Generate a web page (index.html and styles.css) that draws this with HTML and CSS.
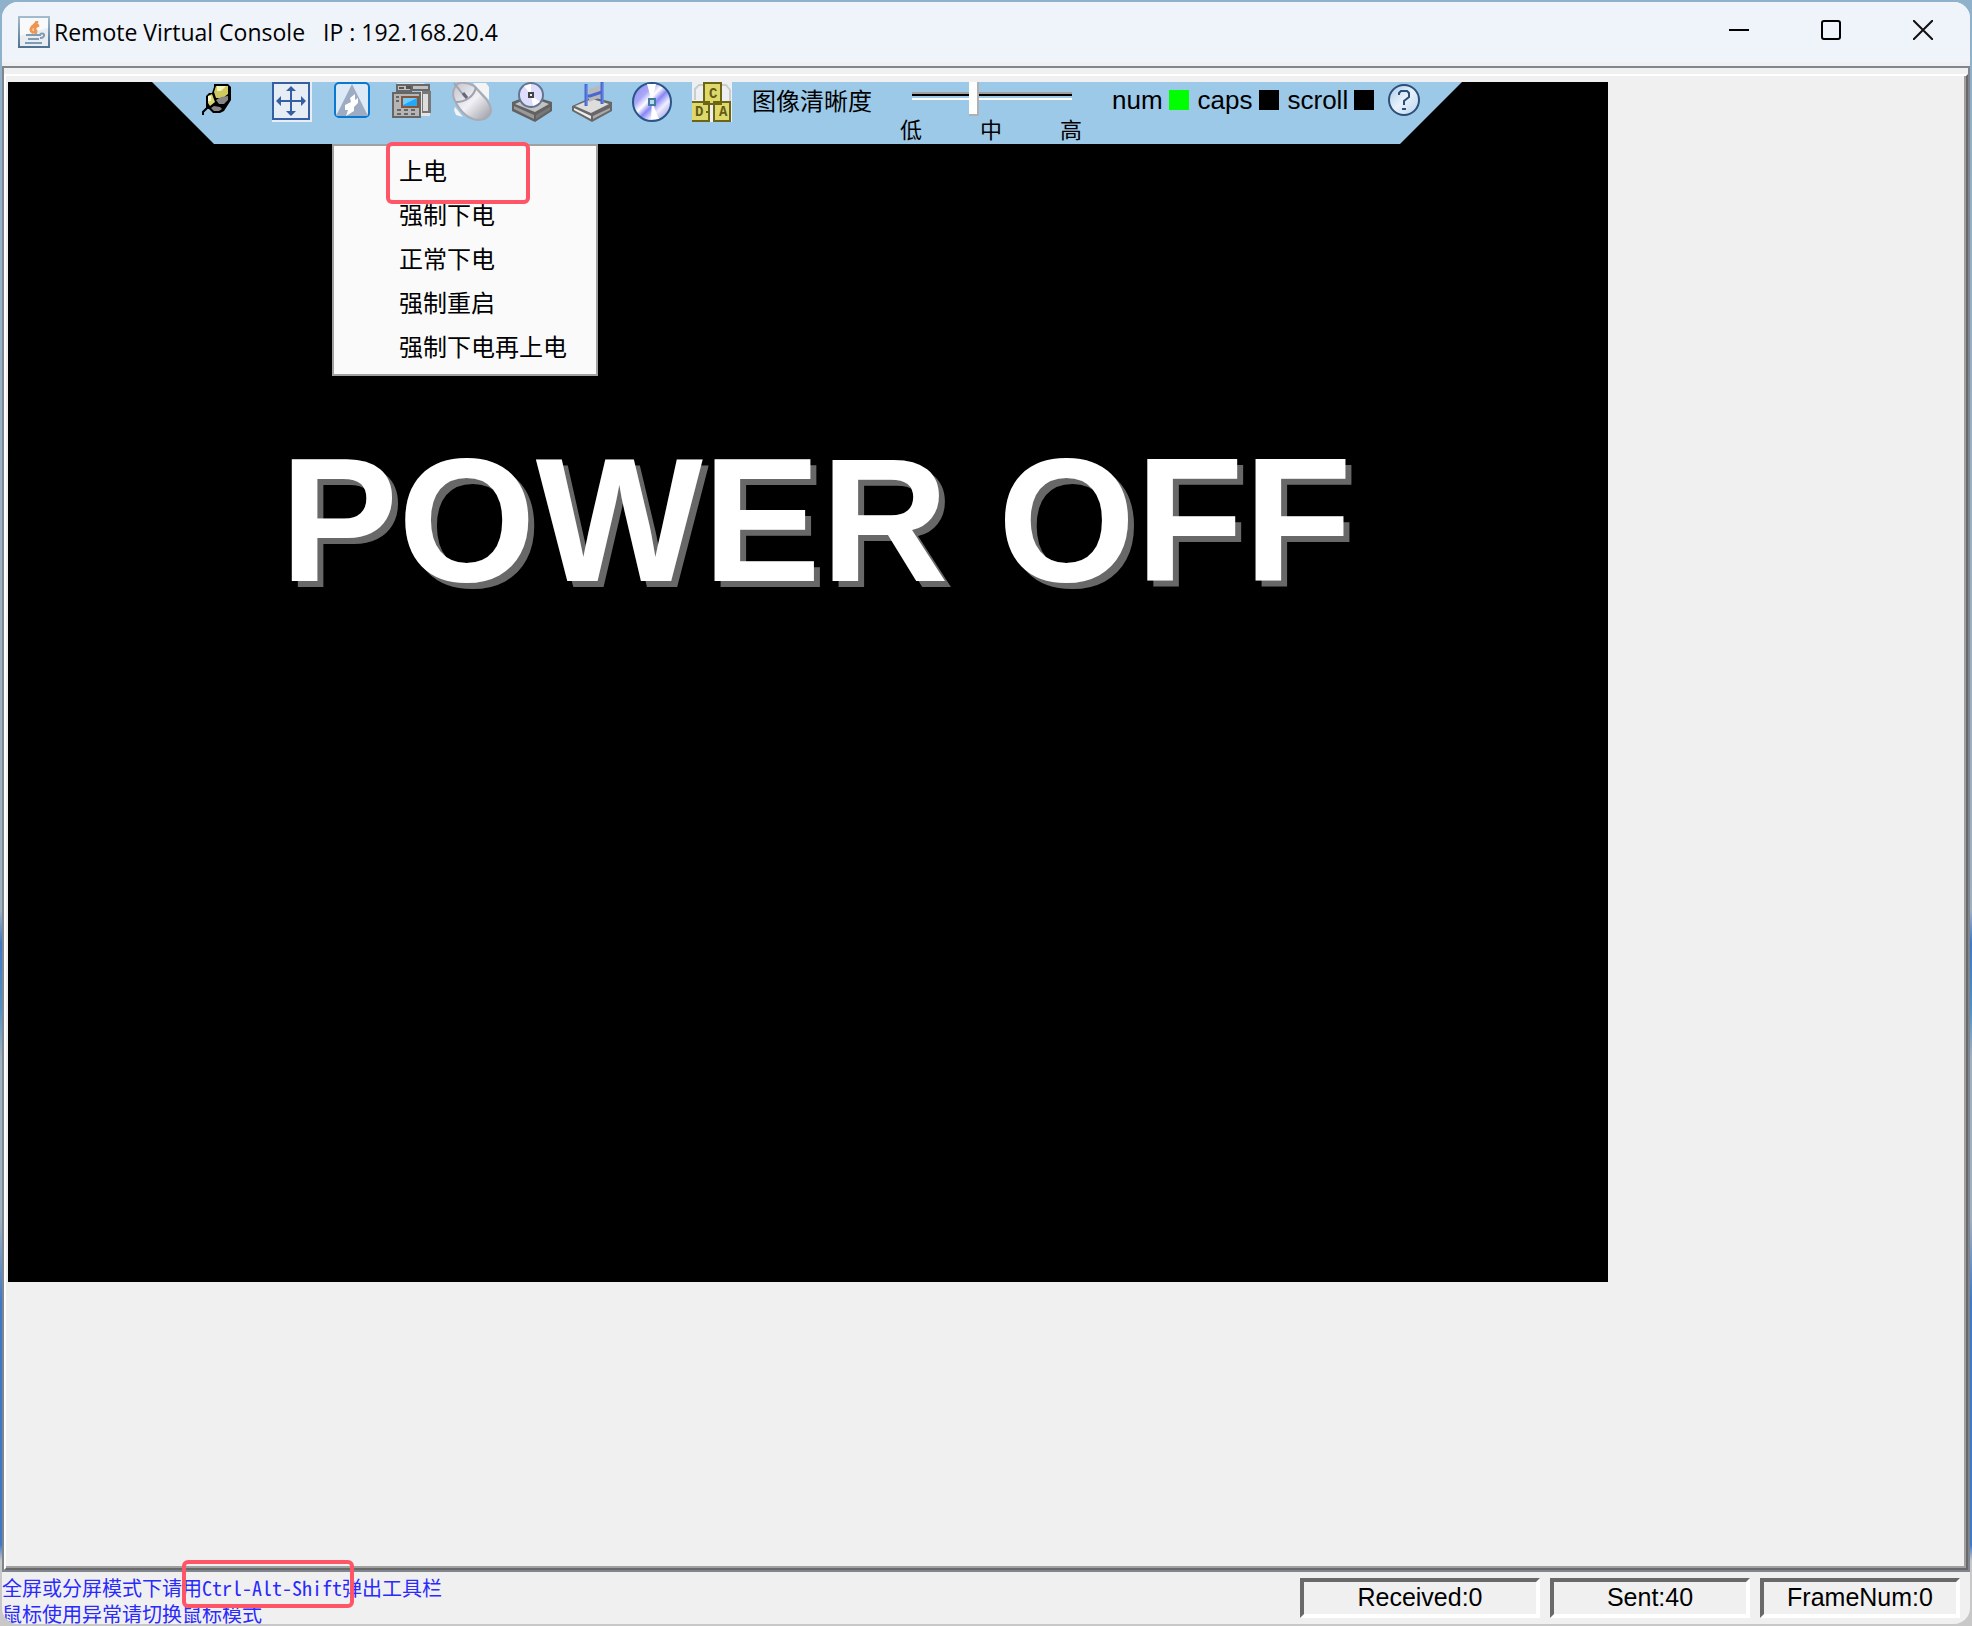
FILE: index.html
```html
<!DOCTYPE html>
<html lang="zh-CN">
<head>
<meta charset="utf-8">
<title>Remote Virtual Console</title>
<link rel="stylesheet" href="styles.css">
</head>
<body>
<div class="window">
  <header class="titlebar">
    <svg class="java" viewBox="0 0 32 32" aria-hidden="true">
      <defs><linearGradient id="jb" x2="0" y2="1"><stop stop-color="#a5bdcf"/><stop offset="1" stop-color="#4c718e"/></linearGradient></defs>
      <rect width="32" height="32" fill="url(#jb)"/><rect x="2" y="2" width="28" height="28" fill="#e9edf1"/><path d="M2 2h28v10L2 20z" fill="#f8f9fa"/>
      <path d="M19 5c0 4-7 5-6 9 0 2 2 2 3 3M21 9c-5 2-5 4-3 6 0 1 0 2-1 3" fill="none" stroke="#ee9551" stroke-width="3"/>
      <path d="M8 19h15M10 23h11M7 27h17M22 18c6-2 5 4 0 4" fill="none" stroke="#7e9db5" stroke-width="2"/>
    </svg>
    <h1 class="title"><span>Remote Virtual Console</span><span>IP : 192.168.20.4</span></h1>
    <div class="controls">
      <button aria-label="Minimize"><svg viewBox="0 0 20 20"><path d="M0 10h20" stroke="#000" stroke-width="2"/></svg></button>
      <button aria-label="Maximize"><svg viewBox="0 0 20 20"><rect x="1" y="1" width="18" height="18" rx="2" fill="none" stroke="#000" stroke-width="2"/></svg></button>
      <button aria-label="Close"><svg viewBox="0 0 20 20"><path d="M0 0l20 20M20 0L0 20" stroke="#111" stroke-width="2"/></svg></button>
    </div>
  </header>
  <main class="viewport">
    <div class="bevel">
      <div class="screen">
        <nav class="toolbar">
          <div class="tools">
            <button aria-label="Pin"><svg viewBox="0 0 40 40"><path d="M7 33v-3l6-6" fill="none" stroke="#000" stroke-width="2"/><path d="M18 2h14l3 3v13l-7 11-4 2h-7l-4-4h-3V14l3-3h3l2-6z" fill="#000"/><path d="M20 4h12v8l-5 4h-7l-2-6z" fill="#cfca60"/><path d="M21 4h9l-5 5h-4z" fill="#f6f5b8"/><path d="M12 14l4-2 3 8-5 4-2-3z" fill="#dcd76c"/><path d="M12 14h3v5h-3z" fill="#fbfad4"/><path d="M20 18l5-3 7-1v4l-4 4h-5zM18 24l6 1 2 2-3 2h-5l-3-3z" fill="#868686"/></svg></button>
            <button aria-label="Full screen"><svg viewBox="0 0 40 40"><path d="M0 0h40v40H0z" fill="#e9eef4"/><path d="M1 1h36v36H1z" fill="#e6edf5" stroke="#345fa5" stroke-width="2"/><path d="M19 6v27M5 19h28" stroke="#345fa5" stroke-width="2"/><path d="M19 4l-5 5h10zM19 34l-5-5h10zM4 19l5-5v10zM34 19l-5-5v10z" fill="#345fa5"/></svg></button>
            <button aria-label="Power"><svg viewBox="0 0 40 40"><rect x="3" y="1" width="34" height="34" rx="4" fill="#dce9f7" stroke="#0878d0" stroke-width="2"/><path d="M20 2L4 34h32z" fill="#9dabc3"/><path d="M18 16l5-4v6l3-2v5l-4 4v4l-8 5 2-6h-3v-5l6-3z" fill="#fff"/></svg></button>
            <button aria-label="Record"><svg viewBox="0 0 40 40"><path d="M5 1h27l6 5v28h-9V9H5z" fill="#e2e4e6"/><path d="M5 3h14v6H5zM20 3h17v5H20z" fill="#c0c0c0" stroke="#686868" stroke-width="2"/><path d="M7 5h5v2H7zM14 4h5v3h-5z" fill="#555"/><path d="M30 9h9v22h-9z" fill="#777"/><path d="M31 12h5v17h-5z" fill="#ddd"/><path d="M1 11h27v24H1z" fill="#b5b5b5" stroke="#666" stroke-width="2"/><path d="M10 15h16v10H10z" fill="#20a9fb" stroke="#85563b" stroke-width="2"/><path d="M11 16h14L11 23z" fill="#72cafd"/><path d="M4 15h3m-3 4h3M5 28h4m3 0h4m3 0h4M5 32h4m3 0h4m3 0h4" stroke="#666" stroke-width="2"/></svg></button>
            <button aria-label="Mouse"><svg viewBox="0 0 40 40"><defs><linearGradient id="m" x2="1" y2="1"><stop offset="0" stop-color="#c2c2cc"/><stop offset=".5" stop-color="#f1f1f6"/><stop offset="1" stop-color="#9898a1"/></linearGradient></defs><path d="M21 1h13l3 4v13zM3 25l8 10-7-2-2-5z" fill="#f6f4f2"/><path d="M3 5C5-1 15 0 22 4l12 13c10 13 3 21-8 21-11-1-18-9-23-19C0 14 1 8 3 5z" fill="url(#m)" stroke="#aaaab4" stroke-width="2"/><path d="M2 1l11 14M4 20c9 0 18-5 20-15" fill="none" stroke="#a2a2ad" stroke-width="2"/><path d="M11 11l4 5" stroke="#666678" stroke-width="3"/></svg></button>
            <button aria-label="CD drive"><svg viewBox="0 0 40 40"><path d="M0 20l18-7 22 7v9L23 40 0 29z" fill="#626262"/><path d="M3 22l15-7 19 7-14 8z" fill="#c3c3c3"/><path d="M2 24l20 9v4L2 27z" fill="#999"/><path d="M24 33l14-8v3l-14 9z" fill="#777"/><circle cx="19" cy="13" r="12" fill="#deddfb" stroke="#637690" stroke-width="2"/><path d="M19 13L12 4l7-2zM19 13l9 7-7 4z" fill="#fff"/><path d="M17 11h4v4h-4z" fill="#eee" stroke="#444" stroke-width="2"/></svg></button>
            <button aria-label="Floppy drive"><svg viewBox="0 0 40 40"><path d="M0 24l20-9 20 5v9L20 40 0 29z" fill="#686868"/><path d="M3 24l17-7 17 5-18 9z" fill="#ddd"/><path d="M2 26l17 8v3L2 28z" fill="#eee"/><path d="M21 34l17-8v2l-17 9z" fill="#aaa"/><path d="M17 7l12-4v12l-12 5z" fill="#b9b9bd"/><path d="M14 2v22M30 0v22M14 14h4l12-4" fill="none" stroke="#4968cf" stroke-width="3"/><path d="M15 3v20M31 1v20" stroke="#7890ea"/></svg></button>
            <button aria-label="Disc"><svg viewBox="0 0 40 40"><defs><linearGradient id="d" x2="1" y2="1"><stop stop-color="#8b89ef"/><stop offset=".3" stop-color="#aaa8f8"/><stop offset=".43" stop-color="#fff"/><stop offset=".55" stop-color="#8886f6"/><stop offset=".7" stop-color="#efeeff"/><stop offset="1" stop-color="#7d7bd5"/></linearGradient></defs><circle cx="20" cy="20" r="19" fill="url(#d)" stroke="#29558b" stroke-width="2"/><path d="M20 20L15 2h9zM20 20l7 17h-8z" fill="#fff"/><path d="M17 17h6v6h-6z" fill="#b6ddf2" stroke="#477b9b" stroke-width="2"/></svg></button>
            <button aria-label="Keys"><svg viewBox="0 0 40 40"><path d="M0 0h40v40H0z" fill="#edf0f2"/><path d="M3 18V7l4-4h5M28 3h6l4 5v11" fill="none" stroke="#ccc" stroke-width="2"/><path d="M12 1h17v21H12zM-1 20h18v19H-1zM22 20h16v19H22z" fill="#dfd96c" stroke="#6c6515" stroke-width="2"/><g font-family="Liberation Mono, monospace" font-weight="700" font-size="14" fill="#625b16"><text x="17" y="16">C</text><text x="3" y="34">D</text><text x="27" y="34">A</text></g><path d="M14 30h3" stroke="#6c6515" stroke-width="2"/></svg></button>
          </div>
          <label class="clarity" for="clarity">图像清晰度</label>
          <div class="slider">
            <input id="clarity" type="range" min="0" max="100" value="38">
            <div class="ticks"><span>低</span><span>中</span><span>高</span></div>
          </div>
          <div class="locks">
            <span class="lock">num<i class="led on"></i></span>
            <span class="lock">caps<i class="led"></i></span>
            <span class="lock">scroll<i class="led"></i></span>
          </div>
          <button class="help" aria-label="Help"><svg viewBox="0 0 32 32"><defs><linearGradient id="h" x2="1" y2="1"><stop stop-color="#a9cbe9"/><stop offset=".5" stop-color="#e8f2fc"/><stop offset="1" stop-color="#b5d3ee"/></linearGradient></defs><circle cx="16" cy="16" r="15" fill="url(#h)" stroke="#2c4f78" stroke-width="2"/><path d="M11 11V9l2-2h6l2 2v4l-5 4v4M14 25h4" fill="none" stroke="#2c4f78" stroke-width="2"/></svg></button>
        </nav>
        <div class="menu">
          <button>上电</button>
          <button>强制下电</button>
          <button>正常下电</button>
          <button>强制重启</button>
          <button>强制下电再上电</button>
          <i class="mark mark-power"></i>
        </div>
        <p class="power">POWER OFF</p>
      </div>
    </div>
  </main>
  <footer class="status">
    <div class="hints">
      <p>全屏或分屏模式下请用Ctrl-Alt-Shift弹出工具栏</p>
      <p>鼠标使用异常请切换鼠标模式</p>
      <i class="mark mark-keys"></i>
    </div>
    <div class="panels">
      <div class="panel wide">Received:0</div>
      <div class="panel">Sent:40</div>
      <div class="panel">FrameNum:0</div>
    </div>
  </footer>
</div>
</body>
</html>
```
FILE: styles.css
```css
* { box-sizing: border-box; }
body {
  margin: 0;
  min-height: 100vh;
  display: flex;
  padding: 2px;
  background: linear-gradient(#8fb1cb, #9fb0bf 56%, #3f78c4 58%, #4d90c4 62%, #9fb0bf 65%, #9fb0bf 75%, #3f78c4 80%, #3f78c4 95%, #c8c8c8 96%);
  font-family: "Liberation Sans", "Noto Sans CJK SC", sans-serif;
  color: #000;
}
p, h1 { margin: 0; font-weight: 400; }
button { border: 0; padding: 0; background: none; font: inherit; color: inherit; }
svg { display: block; }

.window {
  flex: 1;
  display: flex;
  flex-direction: column;
  border-radius: 16px;
  overflow: hidden;
  background: #f0f0f0;
}
.titlebar {
  height: 60px;
  display: flex;
  align-items: center;
  padding-left: 16px;
  background: #eff3fa;
}
.java { width: 32px; height: 32px; }
.title {
  display: flex;
  gap: 18px;
  padding-left: 4px;
  font: 23px/32px "Open Sans", "Noto Sans", sans-serif;
}
.controls { margin-left: auto; padding-right: 1px; display: flex; }
.controls button { width: 92px; height: 60px; padding-bottom: 4px; display: grid; place-items: center; }
.controls svg { width: 20px; height: 20px; }

.viewport {
  flex: 1;
  display: flex;
  margin-top: 4px;
  border: 2px solid #80868f;
  padding-top: 6px;
}
.bevel {
  flex: 1;
  border: 2px solid;
  border-color: #fff #696969 #696969 #fff;
  box-shadow: inset -2px -2px #a0a0a0;
  padding: 6px 0 0 2px;
}
.screen {
  position: relative;
  max-width: 1600px;
  aspect-ratio: 4 / 3;
  background: #000;
}
.toolbar {
  width: 1310px;
  height: 62px;
  margin-left: 144px;
  padding-left: 44px;
  display: flex;
  align-items: flex-start;
  background: #9dc9e8;
  clip-path: polygon(0 0, 100% 0, calc(100% - 62px) 100%, 62px 100%);
}
.tools { display: flex; gap: 20px; }
.tools svg { width: 40px; height: 40px; }
.tools button:first-child { margin-right: 16px; }
.clarity { margin-left: 20px; font-size: 24px; line-height: 40px; }
.slider { width: 184px; margin-left: 28px; }
.slider input {
  display: block;
  appearance: none;
  width: 160px;
  height: 34px;
  margin: 0 0 0 12px;
  background: none;
}
.slider input::-webkit-slider-runnable-track {
  height: 34px;
  background:
    linear-gradient(#a0a0a0 0 2px, #000 2px 4px, #9dc9e8 4px 6px, #fff 6px) 0 10px / 100% 8px no-repeat;
}
.slider input::-webkit-slider-thumb {
  appearance: none;
  width: 10px;
  height: 34px;
  background: #fff;
  border: solid #b0b0b0;
  border-width: 0 2px 2px 0;
}
.ticks { display: flex; justify-content: space-between; padding-right: 2px; font-size: 22px; line-height: 30px; }
.locks { display: flex; gap: 9px; margin-left: 28px; font-size: 26px; line-height: 36px; }
.lock { display: flex; align-items: center; gap: 6px; }
.led { width: 20px; height: 20px; background: #000; }
.led.on { background: #0f0; }
.help { margin: 2px 0 0 14px; }
.help svg { width: 32px; height: 32px; }

.menu {
  position: absolute;
  left: 324px;
  top: 62px;
  width: 266px;
  display: flex;
  flex-direction: column;
  padding: 4px 0;
  border: 2px solid #a0a0a0;
  background: #fafafa;
}
.menu button {
  height: 44px;
  padding-left: 65px;
  text-align: left;
  font-size: 24px;
  line-height: 44px;
}
.mark {
  position: absolute;
  border: 4px solid #ff5566;
  border-radius: 6px;
  pointer-events: none;
}
.mark-power { left: 52px; top: -4px; width: 144px; height: 62px; }
.power {
  padding: 276px 0 0 272px;
  font-size: 177px;
  line-height: 200px;
  font-weight: 700;
  white-space: nowrap;
  color: #fff;
  text-shadow: 6px 6px #686868;
}

.status { display: flex; align-items: flex-start; justify-content: space-between; height: 52px; }
.hints {
  position: relative;
  display: grid;
  gap: 6px;
  padding-top: 6px;
  font: 20px/20px "Noto Sans CJK SC", sans-serif;
  font-feature-settings: "hwid";
  color: #2a2aff;
}
.mark-keys { left: 180px; top: -12px; width: 172px; height: 48px; }
.panels { display: flex; gap: 10px; padding: 6px 10px 0 0; }
.panel {
  width: 200px;
  height: 40px;
  border: 4px solid;
  border-color: #696969 #fff #fff #696969;
  text-align: center;
  font-size: 25px;
  line-height: 30px;
}
.panel.wide { width: 240px; }
```
